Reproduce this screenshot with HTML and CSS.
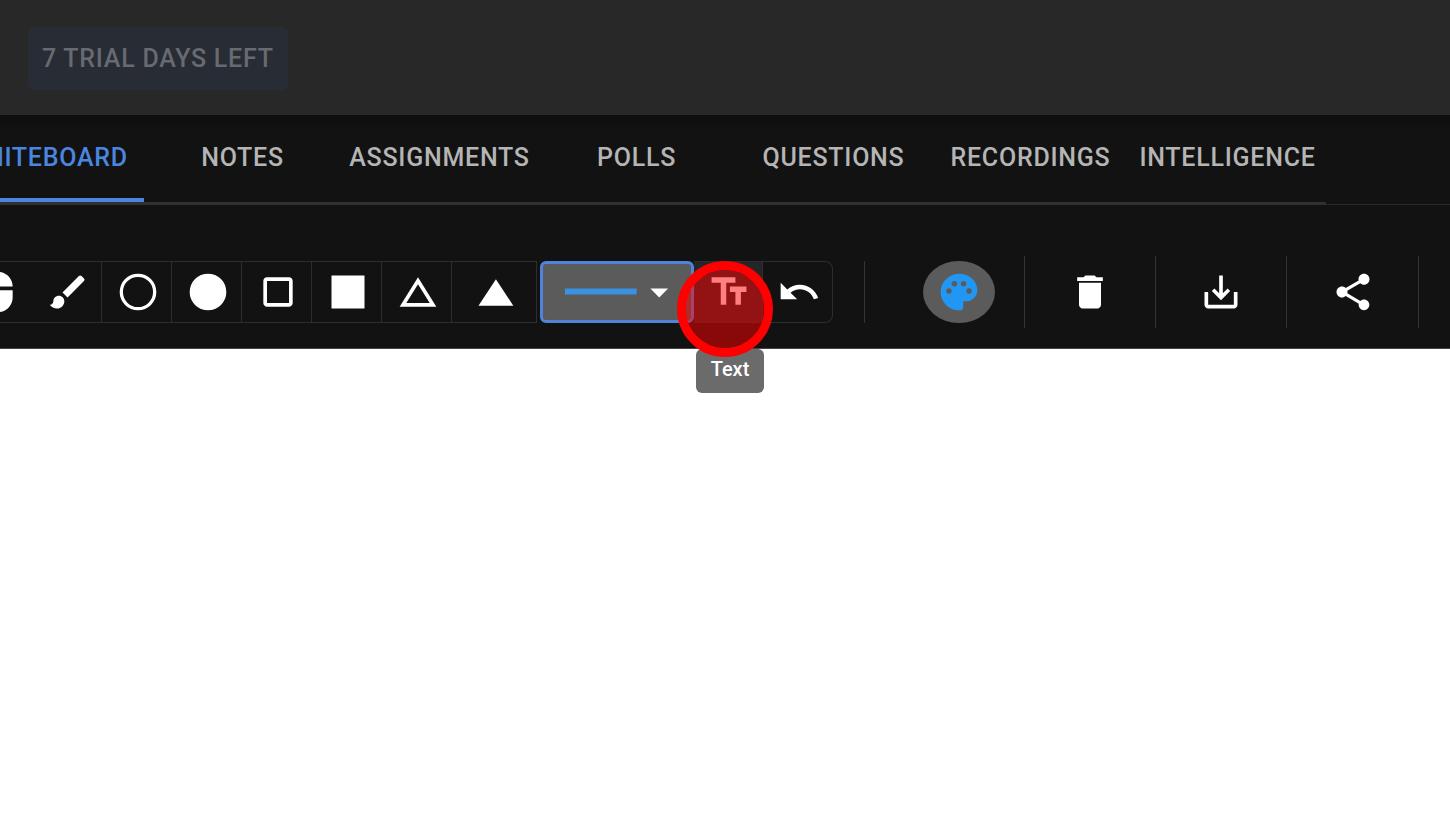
FILE: index.html
```html
<!DOCTYPE html>
<html lang="en">
<head>
<meta charset="utf-8">
<meta name="viewport" content="width=device-width, initial-scale=1">
<title>Whiteboard</title>
<link rel="stylesheet" href="styles.css">
</head>
<body>
<div class="app">
  <header class="topbar">
    <button class="trial" type="button" disabled>7 TRIAL DAYS LEFT</button>
  </header>

  <nav class="tabs" aria-label="Sections">
    <div class="tab-strip">
      <a class="tab tab-active" href="#whiteboard" aria-current="page">WHITEBOARD</a>
      <a class="tab" href="#notes">NOTES</a>
      <a class="tab" href="#assignments">ASSIGNMENTS</a>
      <a class="tab" href="#polls">POLLS</a>
      <a class="tab" href="#questions">QUESTIONS</a>
      <a class="tab" href="#recordings">RECORDINGS</a>
      <a class="tab" href="#intelligence">INTELLIGENCE</a>
    </div>
  </nav>

  <div class="toolbar" role="toolbar" aria-label="Drawing tools">
    <div class="tools">
      <button class="tool tool-first" type="button" aria-label="Select"><svg class="icon" viewBox="0 0 24 24"><path d="M13 1.07V9h7c0-4.08-3.05-7.44-7-7.93zM4 15c0 4.42 3.58 8 8 8s8-3.58 8-8v-4H4v4zm7-13.93C7.05 1.56 4 4.92 4 9h7V1.07z"/></svg></button>
      <button class="tool" type="button" aria-label="Brush"><svg class="icon" viewBox="0 0 24 24"><path d="M7 14c-1.66 0-3 1.34-3 3 0 1.31-1.16 2-2 2 .92 1.22 2.49 2 4 2 2.21 0 4-1.79 4-4 0-1.66-1.34-3-3-3zm13.71-9.37l-1.34-1.34a1 1 0 0 0-1.41 0L9 12.25 11.75 15l8.96-8.96a1 1 0 0 0 0-1.41z"/></svg></button>
      <button class="tool" type="button" aria-label="Circle"><svg class="icon" viewBox="0 0 24 24"><path d="M12 2a10 10 0 1 0 0 20 10 10 0 0 0 0-20zm0 18.200a8.200 8.200 0 1 1 0-16.400 8.200 8.200 0 0 1 0 16.400z"/></svg></button>
      <button class="tool" type="button" aria-label="Filled circle"><svg class="icon" viewBox="0 0 24 24"><circle cx="12" cy="12" r="10"/></svg></button>
      <button class="tool" type="button" aria-label="Square"><svg class="icon" viewBox="0 0 24 24"><path d="M18 4H6c-1.100 0-2 .9-2 2v12c0 1.100.9 2 2 2h12c1.100 0 2-.9 2-2V6c0-1.100-.9-2-2-2zm0 14H6V6h12v12z"/></svg></button>
      <button class="tool" type="button" aria-label="Filled square"><svg class="icon" viewBox="0 0 24 24"><path d="M3 3h18v18H3z"/></svg></button>
      <button class="tool" type="button" aria-label="Triangle"><svg class="icon" viewBox="0 0 24 24"><path d="M12 7.770L18.390 18H5.610L12 7.770M12 4L2 20h20L12 4z"/></svg></button>
      <button class="tool tool-wide" type="button" aria-label="Filled triangle"><svg class="icon" viewBox="0 0 24 24"><path d="M12.500 5L3 19.500h19z"/></svg></button>
      <div class="stroke">
        <svg class="stroke-art" viewBox="0 0 148 57" aria-hidden="true"><path class="stroke-line" d="M21 25h73v6H21z"/><path d="M108 25h18l-9 9z"/></svg>
        <select class="stroke-select" aria-label="Stroke width"><option aria-label="Thin"></option></select>
      </div>
      <div class="text-tool">
        <button class="tool tool-hover" type="button" aria-label="Text" aria-describedby="tip"><svg class="icon" viewBox="0 0 24 24"><path d="M2.500 4v3h5v12h3V7h5V4h-13zm19 5h-9v3h3v7h3v-7h3V9z"/></svg></button>
        <span class="tooltip" id="tip" role="tooltip">Text</span>
        <span class="click-marker" aria-hidden="true"></span>
      </div>
      <button class="tool tool-last" type="button" aria-label="Undo"><svg class="icon" viewBox="0 0 24 24"><path d="M12.500 8c-2.650 0-5.050.990-6.900 2.600L2 7v9h9l-3.620-3.620c1.390-1.160 3.160-1.880 5.120-1.880 3.540 0 6.550 2.310 7.600 5.500l2.370-.780C21.080 11.030 17.150 8 12.500 8z"/></svg></button>
    </div>
    <div class="color-cell">
      <button class="palette" type="button" aria-label="Colours"><svg class="icon" viewBox="0 0 24 24"><path d="M12 2C6.490 2 2 6.490 2 12s4.490 10 10 10c1.500 0 2.300-.5 2.300-1.600V17H16c3.310 0 6-2.690 6-6 0-4.960-4.490-9-10-9zM6.500 13a1.500 1.500 0 1 1 0-3 1.500 1.500 0 0 1 0 3zm3-4a1.500 1.500 0 1 1 0-3 1.500 1.500 0 0 1 0 3zm5 0a1.500 1.500 0 1 1 0-3 1.500 1.500 0 0 1 0 3zm3 4a1.500 1.500 0 1 1 0-3 1.500 1.500 0 0 1 0 3z"/></svg></button>
    </div>
    <button class="action" type="button" aria-label="Delete"><svg class="icon" viewBox="0 0 24 24"><path d="M6 19c0 1.100.9 2 2 2h8c1.100 0 2-.9 2-2V7H6v12zM19 4h-3.500l-1-1h-5l-1 1H5v2h14V4z"/></svg></button>
    <button class="action" type="button" aria-label="Download"><svg class="icon" viewBox="0 0 24 24"><path d="M19 12v7H5v-7H3v7c0 1.100.9 2 2 2h14c1.100 0 2-.9 2-2v-7h-2zm-6 .670l2.590-2.580L17 11.500l-5 5-5-5 1.410-1.410L11 12.670V3h2z"/></svg></button>
    <button class="action" type="button" aria-label="Share"><svg class="icon" viewBox="0 0 24 24"><path d="M18 16.080c-.760 0-1.440.3-1.960.770L8.910 12.700c.050-.230.090-.460.090-.7s-.040-.470-.090-.7l7.050-4.110c.540.5 1.250.810 2.040.810 1.660 0 3-1.340 3-3s-1.340-3-3-3-3 1.340-3 3c0 .240.040.470.090.7L8.040 9.810C7.500 9.310 6.790 9 6 9c-1.660 0-3 1.340-3 3s1.340 3 3 3c.790 0 1.500-.310 2.040-.810l7.120 4.160c-.050.210-.080.430-.080.650 0 1.610 1.310 2.920 2.920 2.920s2.920-1.310 2.920-2.920-1.310-2.920-2.920-2.920z"/></svg></button>
  </div>

  <main class="board" aria-label="Whiteboard canvas"></main>
</div>
</body>
</html>
```

FILE: styles.css
```css
* {
  box-sizing: border-box;
}

body {
  margin: 0;
  background: #fff;
  font-family: Roboto, "Liberation Sans", sans-serif;
}

button,
select {
  margin: 0;
  padding: 0;
  border: 0;
  background: none;
  color: inherit;
  font: inherit;
}

.app {
  display: flex;
  flex-direction: column;
  min-height: 100vh;
  overflow: hidden;
}

.topbar {
  padding: 27px 28px 25px;
  background: #282828;
}

.trial {
  display: block;
  padding: 0 14px;
  border-radius: 6px;
  background: #282c35;
  color: #676a70;
  font-size: 25px;
  font-weight: 500;
  line-height: 63px;
  letter-spacing: 0.03em;
}

.tabs {
  border-bottom: 1px solid #2a2a2a;
  background: linear-gradient(#0d0d0d, #121212 14px);
}

.tab-strip {
  display: flex;
  width: max-content;
  margin: 0 0 -1px -53px;
  border-bottom: 3px solid #303030;
}

.tab {
  flex: none;
  width: 197px;
  padding-top: 2px;
  border-bottom: 4px solid transparent;
  color: #b5b5b5;
  font-size: 25px;
  font-weight: 500;
  line-height: 81px;
  letter-spacing: 0.03em;
  text-align: center;
  text-decoration: none;
}

.tab-active {
  border-bottom-color: #4a86e0;
  color: #4a86e0;
}

.toolbar {
  display: flex;
  align-items: center;
  height: 144px;
  padding-top: 31px;
  padding-bottom: 1px;
  background: #121212;
  border-bottom: 1px solid #444;
  color: #fff;
}

.icon {
  display: block;
  flex: none;
  width: 44px;
  height: 44px;
  fill: currentColor;
}

.tools {
  display: flex;
  flex: none;
  height: 62px;
  margin-left: -36px;
}

.tool {
  display: flex;
  flex: none;
  align-items: center;
  justify-content: center;
  width: 70px;
  height: 62px;
  padding-left: 2px;
  border: 1px solid #2e2e2e;
  border-left: 0;
}

.tool-first {
  width: 68px;
  border-right: 0;
  padding-left: 0;
}

.tool-wide {
  width: 85px;
  margin-right: 3px;
}

.tool-hover {
  width: 69px;
  background: #262628;
}

.tool-last {
  border-radius: 0 8px 8px 0;
}

.stroke {
  display: grid;
  width: 154px;
  border: 3px solid #4f84d8;
  border-radius: 6px;
  background: #5b5b5b;
}

.stroke-art,
.stroke-select {
  grid-area: 1 / 1;
  width: 100%;
  height: 100%;
}

.stroke-art {
  fill: #fff;
}

.stroke-line {
  fill: #3b92e0;
}

.stroke-select {
  appearance: none;
}

.text-tool {
  position: relative;
}

.tooltip {
  position: absolute;
  top: 88px;
  left: 2px;
  z-index: 1;
  width: 68px;
  padding-bottom: 4px;
  border-radius: 6px;
  background: #6b6b6b;
  color: #fff;
  font-size: 20px;
  font-weight: 500;
  line-height: 40px;
  text-align: center;
}

.click-marker {
  position: absolute;
  top: 0;
  left: -17px;
  z-index: 2;
  width: 96px;
  height: 96px;
  border: 9px solid #f00;
  border-radius: 50%;
  background: rgba(255, 0, 0, 0.5);
  background-clip: padding-box;
}

.color-cell {
  display: flex;
  flex: none;
  align-items: center;
  width: 160px;
  height: 62px;
  margin-left: 31px;
  padding-left: 58px;
  border-left: 1px solid #333;
}

.palette {
  display: flex;
  align-items: center;
  justify-content: center;
  width: 72px;
  height: 62px;
  border-radius: 50%;
  background: #5b5b5b;
  color: #2196f3;
}

.action {
  display: flex;
  flex: none;
  align-items: center;
  justify-content: center;
  width: 131px;
  height: 72px;
  border-left: 1px solid #333;
}

.action:last-child {
  width: 133px;
  border-right: 1px solid #333;
}

.board {
  flex: 1;
  background: #fff;
}
```
